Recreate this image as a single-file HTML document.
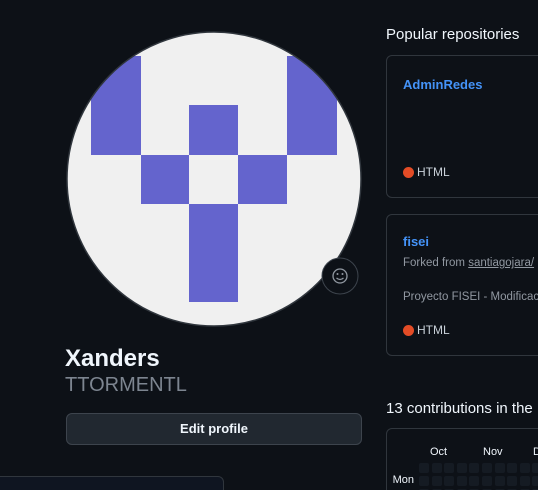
<!DOCTYPE html><html><head><style>
html,body{margin:0;width:538px;height:490px;overflow:hidden}
body{background:#0d1117;font-family:"Liberation Sans",sans-serif;position:relative}
.a{position:absolute}
.card{position:absolute;border:1px solid #30363d;border-radius:6px;box-sizing:border-box}
.lnk{color:#4493f8;font-weight:bold;font-size:13px}
.m{color:#9198a1;font-size:11.5px}
.dot{display:inline-block;width:11px;height:11px;border-radius:50%;background:#e34c26;vertical-align:-2px;margin-right:3px}
.lang{color:#c9d1d9;font-size:12px}
.cell{position:absolute;width:10px;height:10px;border-radius:2px;background:#151b23}
</style></head><body>
<svg class="a" style="left:0;top:0" width="380" height="340">
<defs><clipPath id="c"><circle cx="214" cy="179" r="147"/></clipPath></defs>
<circle cx="214" cy="179" r="147" fill="#f0f0f0"/>
<g clip-path="url(#c)" fill="#6464cd">
<rect x="91" y="56" width="50" height="99"/>
<rect x="287" y="56" width="50" height="99"/>
<rect x="189" y="105" width="49" height="50"/>
<rect x="141" y="155" width="48" height="49"/>
<rect x="238" y="155" width="49" height="49"/>
<rect x="189" y="204" width="49" height="98"/>
</g>
<circle cx="214" cy="179" r="147" fill="none" stroke="#30363d" stroke-width="1.5"/>
<circle cx="340" cy="276" r="18" fill="#0d1117" stroke="#3d444d"/>
<circle cx="340" cy="276" r="7" fill="none" stroke="#9198a1" stroke-width="1.3"/>
<circle cx="337.5" cy="274" r="1" fill="#9198a1"/><circle cx="342.5" cy="274" r="1" fill="#9198a1"/>
<path d="M336.5 278q3.5 3 7 0" fill="none" stroke="#9198a1" stroke-width="1.2"/>
</svg>
<div class="a" style="left:65px;top:345px;color:#f0f6fc;font-size:24px;font-weight:bold">Xanders</div>
<div class="a" style="left:65px;top:374px;color:#7d8590;font-size:20px;font-weight:300">TTORMENTL</div>
<div class="a" style="left:66px;top:413px;width:296px;height:32px;box-sizing:border-box;background:#212830;border:1px solid #3d444d;border-radius:6px;color:#f0f6fc;font-size:13px;font-weight:bold;text-align:center;line-height:30px">Edit profile</div>
<div class="a" style="left:-10px;top:476px;width:232px;height:30px;background:#0f1521;border:1px solid #30363d;border-radius:6px"></div>
<div class="a" style="left:386px;top:26px;color:#f0f6fc;font-size:15px">Popular repositories</div>
<div class="card" style="left:386px;top:55px;width:170px;height:143px"><div class="lnk a" style="left:16px;top:21px">AdminRedes</div><div class="a lang" style="left:16px;top:109px"><span class="dot"></span>HTML</div></div>
<div class="card" style="left:386px;top:214px;width:170px;height:142px"><div class="lnk a" style="left:16px;top:19px">fisei</div><div class="a m" style="left:16px;top:42px;white-space:nowrap">Forked from <u>santiagojara/</u></div><div class="a m" style="left:16px;top:76px;white-space:nowrap">Proyecto FISEI - Modificac</div><div class="a lang" style="left:16px;top:108px"><span class="dot"></span>HTML</div></div>
<div class="a" style="left:386px;top:400px;color:#f0f6fc;font-size:15px;white-space:nowrap">13 contributions in the</div>
<div class="card" style="left:386px;top:428px;width:170px;height:80px"></div>
<div class="a" style="left:430px;top:446px;color:#f0f6fc;font-size:11px">Oct</div>
<div class="a" style="left:483px;top:446px;color:#f0f6fc;font-size:11px">Nov</div>
<div class="a" style="left:533px;top:446px;color:#f0f6fc;font-size:11px">D</div>
<div class="a" style="left:376px;top:474px;width:38px;text-align:right;color:#f0f6fc;font-size:11px">Mon</div>
<div id="g"></div>
<script>
var h='';for(var r=0;r<3;r++)for(var c=0;c<11;c++)h+='<div class="cell" style="left:'+(419+c*12.6)+'px;top:'+(463+r*13)+'px"></div>';document.getElementById('g').innerHTML=h;
</script>
</body></html>
